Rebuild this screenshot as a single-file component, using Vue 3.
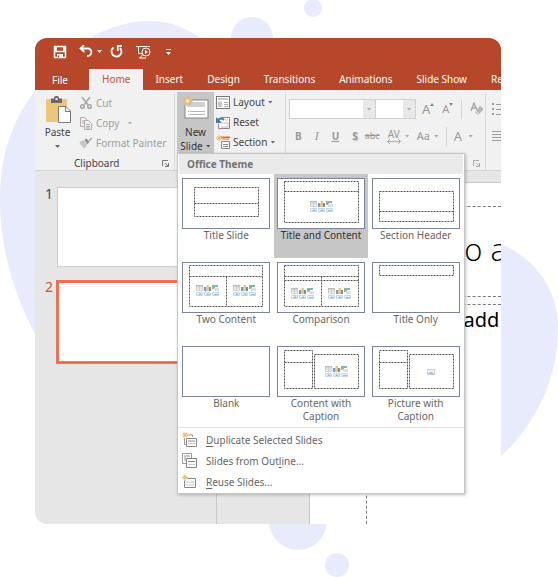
<script setup>
import { ref } from 'vue'

const tabs = ['File', 'Home', 'Insert', 'Design', 'Transitions', 'Animations', 'Slide Show', 'Review']
const activeTab = ref('Home')
const selectedLayout = ref('Title and Content')

const layouts = [
  { name: 'Title Slide', d: 'M12.5 9.5H76.5V38.5H12.5ZM12.5 25.5H76.5', icons: [] },
  { name: 'Title and Content', d: 'M7.5 3.5H81.5V44.5H7.5ZM7.5 13.5H81.5', icons: [[33, 23]] },
  { name: 'Section Header', d: 'M7.5 13.5H81.5V43.5H7.5ZM7.5 33.5H81.5', icons: [] },
  { name: 'Two Content', d: 'M7.5 3.5H80.5V44.5H7.5ZM7.5 14.5H80.5M44.5 14.5V44.5', icons: [[14, 23], [51, 23]] },
  { name: 'Comparison', d: 'M7.5 3.5H81.5V44.5H7.5ZM7.5 14.5H81.5M7.5 18.5H81.5M44.5 14.5V44.5', icons: [[14, 26], [51, 26]] },
  { name: 'Title Only', d: 'M7.5 3.5H81.5V13.5H7.5Z', icons: [] },
  { name: 'Blank', d: '', icons: [] },
  { name: 'Content with Caption', d: 'M7.5 4.5H35.5V42.5H7.5ZM7.5 16.5H35.5M37.5 8.5H81.5V42.5H37.5Z', icons: [[48, 20]] },
  { name: 'Picture with Caption', d: 'M7.5 4.5H35.5V42.5H7.5ZM7.5 16.5H35.5M37.5 8.5H81.5V42.5H37.5Z', icons: [], picture: true }
]
</script>

<template>
  <main class="page">
    <svg class="blobs" viewBox="0 0 558 577" aria-hidden="true">
      <g fill="#e8ebfb">
        <path d="M35 334C12 290 0 245 0 200C0 155 12 121 35 91C62 50 105 21 150 21C172 21 188 29 203 40V334Z" />
        <path d="M501 244C536 259 558 290 558 328C558 378 536 424 501 456Z" />
        <circle cx="252" cy="38" r="21" />
        <circle cx="313" cy="8" r="9" />
        <circle cx="298" cy="521" r="29" />
        <circle cx="337" cy="565" r="12" />
      </g>
    </svg>

    <section class="window">
      <header class="titlebar">
        <button class="qa" aria-label="Save">
          <svg width="14" height="14" viewBox="0 0 14 14" fill="none" stroke="#fff" stroke-width="1.5"><path d="M1.5 1.5H12.5V12.5H1.5ZM3 1.5V6.5H11V1.5" /><path d="M4 9H10V12.5H4Z" fill="#fff" stroke="none" /><path d="M5.5 10.5V12.5" stroke="#b7472a" /></svg>
        </button>
        <button class="qa undo" aria-label="Undo">
          <svg width="14" height="14" viewBox="0 0 14 14" fill="none" stroke="#fff" stroke-width="1.8"><path d="M5 0L1.5 3.5L5.5 7M2 3.5H8.5C14 3.5 13.5 11 8 11" /></svg>
          <svg width="5" height="3" viewBox="0 0 5 3"><path d="M0 0H5L2.5 3Z" fill="#fff" /></svg>
        </button>
        <button class="qa redo" aria-label="Redo">
          <svg width="14" height="14" viewBox="0 0 14 14" fill="none" stroke="#fff" stroke-width="1.8"><path d="M3.5 2.5A5 5 0 1 0 10 3M7 1H12M7.8 1V6" /></svg>
        </button>
        <button class="qa show" aria-label="Start slide show">
          <svg width="16" height="14" viewBox="0 0 16 14" fill="none" stroke="#fff"><path d="M0 1.5H14M2.5 1.5V8.5H6M7 9L4 13M3 13H10" /><circle cx="10" cy="7" r="4" /><path d="M9 5L12 7L9 9Z" fill="#fff" stroke="none" /></svg>
        </button>
        <button class="qa more" aria-label="Customize toolbar">
          <svg width="5" height="6" viewBox="0 0 5 6" fill="#fff"><path d="M0 0H5V1H0ZM0 3H5L2.5 6Z" /></svg>
        </button>
      </header>

      <nav class="tabs">
        <button v-for="t in tabs" :key="t" class="tab" :class="{ active: t === activeTab, file: t === 'File' }" @click="activeTab = t">{{ t }}</button>
      </nav>

      <div class="ribbon">
        <section class="group clipboard">
          <div class="tools">
            <button class="paste">
              <svg width="26" height="28" viewBox="0 0 26 28"><rect x="1" y="3" width="21" height="23" rx="1" fill="#edc67c" /><path d="M6 2.5H9C9 .5 10 0 11.5 0S14 .5 14 2.5H17V7H6Z" fill="#696969" /><rect x="10.5" y="2" width="2" height="2" fill="#f1f1f1" /><path d="M13.5 10.5H21L25.5 15V26.5H13.5Z" fill="#fff" stroke="#797979" /><path d="M20.5 10.5V15.5H25.5" fill="none" stroke="#797979" /></svg>
              <span>Paste</span>
              <i class="caret"></i>
            </button>
            <div class="stack muted">
              <button class="row"><svg width="12" height="14" viewBox="0 0 12 14" fill="none" stroke="#a6a6a6" stroke-width="1.5"><path d="M2 1L8 9M10 1L4 9" /><circle cx="2.5" cy="10.5" r="1.8" /><circle cx="9.5" cy="10.5" r="1.8" /></svg>Cut</button>
              <button class="row"><svg width="12" height="13" viewBox="0 0 12 13" fill="#f5f0f3" stroke="#b5aab0"><path d="M.5.5H4.5L7.5 3.5V9.5H.5ZM2 4H5M2 6H5" /><path d="M4.5 3.5H8.5L11.5 6.5V12.5H4.5ZM6 7.5H10M6 9.5H10M6 11H10" /></svg>Copy<i class="caret gap"></i></button>
              <button class="row"><svg width="13" height="12" viewBox="0 0 13 12"><path d="M0 5L4 3L8 7L5 12L4 10L3 10.5L2 8L1 8Z" fill="#c9c5c5" /><path d="M5 3L7 1.5L10 5L8 7Z" fill="#8f8f8f" /><path d="M9 3L12 .5L13 1.5L10 4.5Z" fill="#aaa" /></svg>Format Painter</button>
            </div>
          </div>
          <footer class="caption"><span>Clipboard</span>
            <svg class="launch" width="7" height="7" viewBox="0 0 7 7" fill="none" stroke="#777"><path d="M.5 6V.5H6M3 3L6 6M6.5 3V6.5H3" /></svg>
          </footer>
        </section>

        <section class="group slides">
          <button class="new-slide">
            <svg width="28" height="26" viewBox="0 0 28 26"><rect x="3" y="5" width="23" height="18" fill="#fff" stroke="#858585" /><path d="M6 7H23V12H6Z" fill="#d0d0d0" /><path d="M6 16.5H23M6 19.5H23" stroke="#b5b5b5" stroke-dasharray="1 1 15 1" /><circle cx="5.5" cy="6" r="5" fill="#c6c6c6" /><path d="M5.5 1V11M.5 6H10.5M2 2.5L9 9.5M9 2.5L2 9.5" stroke="#e9ba65" stroke-width="1.5" /><circle cx="5.5" cy="6" r="2" fill="#f9dfaa" /></svg>
            <span>New</span>
            <span class="line">Slide<i class="caret"></i></span>
          </button>
          <div class="stack">
            <button class="row"><svg width="14" height="13" viewBox="0 0 14 13"><rect x=".5" y=".5" width="13" height="12" fill="#fff" stroke="#777" /><path d="M2 2H12V4H2ZM2 5.5H6V11H2Z" fill="#c7c7c7" /><path d="M8 6.5H12M8 8.5H12M8 10.5H12" stroke="#aaa" /></svg>Layout<i class="caret"></i></button>
            <button class="row"><svg width="14" height="13" viewBox="0 0 14 13"><path d="M5 1.5H13.5V12.5H2.5V8" fill="#fff" stroke="#888" /><path d="M9 4H12M6 7H12V11H5" stroke="#bbb" fill="none" /><path d="M2 6C2 3 5 1 8 4" fill="none" stroke="#4178ae" stroke-width="2" /><path d="M0 1V7H6Z" fill="#4178ae" /></svg>Reset</button>
            <button class="row"><svg width="14" height="14" viewBox="0 0 14 14"><path d="M5 2.5H14" stroke="#e0712c" stroke-width="2" /><path d="M5.5 6.5H13.5V13.5H5.5ZM7 9.5H12M7 11.5H12" fill="#fff" stroke="#888" /><path d="M6 4.5H13" stroke="#edb18c" /><path d="M3 0V6M0 3H6M1 1L5 5M5 1L1 5" stroke="#e9b765" /></svg>Section<i class="caret"></i></button>
          </div>
        </section>

        <section class="group font">
          <div class="fontrow">
            <div class="combos">
              <span class="combo wide"><input aria-label="Font" /><button aria-label="Font list"><i class="caret"></i></button></span>
              <span class="combo"><input aria-label="Font size" /><button aria-label="Size list"><i class="caret"></i></button></span>
            </div>
            <button class="glyph big" aria-label="Grow font">A<svg width="4" height="12" viewBox="0 0 4 12"><path d="M0 3L2 0L4 3Z" fill="#888" /></svg></button>
            <button class="glyph shrink" aria-label="Shrink font">A<svg width="4" height="12" viewBox="0 0 4 12"><path d="M0 0L2 3L4 0Z" fill="#888" /></svg></button>
            <i class="rule"></i>
            <button class="glyph" aria-label="Clear formatting"><svg width="14" height="14" viewBox="0 0 14 14"><path d="M1 9L4 1L7 8M2 6H6" fill="none" stroke="#aaa" stroke-width="1.5" /><path d="M5 10L10 4L13 6V8L8 13Z" fill="#b7b7b7" /><path d="M6 9L9 12" stroke="#eee" /></svg></button>
          </div>
          <div class="fontrow second">
            <div class="styles">
              <button class="glyph"><b>B</b></button>
              <button class="glyph serif"><em>I</em></button>
              <button class="glyph"><b><u>U</u></b></button>
              <button class="glyph shadow"><b>S</b></button>
            </div>
            <button class="glyph strike"><s>abc</s></button>
            <button class="glyph av"><span>AV<svg width="14" height="5" viewBox="0 0 14 5" fill="none" stroke="#aaa"><path d="M0 2.5H14M3 0L.5 2.5L3 5M11 0L13.5 2.5L11 5" /></svg></span><i class="caret"></i></button>
            <button class="glyph mid">Aa<i class="caret"></i></button>
            <i class="rule"></i>
            <button class="glyph large">A<i class="caret"></i></button>
          </div>
          <footer class="caption"><span></span>
            <svg class="launch" width="7" height="7" viewBox="0 0 7 7" fill="none" stroke="#aaa"><path d="M.5 6V.5H6M3 3L6 6M6.5 3V6.5H3" /></svg>
          </footer>
        </section>

        <section class="group paragraph">
          <svg width="15" height="14" viewBox="0 0 15 14" stroke="#9c9c9c"><path d="M0 2H2M0 7H2M0 12H2" stroke-width="2" /><path d="M4 2.5H15M4 7.5H15M4 12.5H15" /></svg>
          <svg width="15" height="12" viewBox="0 0 15 12" stroke="#9c9c9c"><path d="M0 1.5H15M0 4.5H15M0 7.5H15M0 10.5H15" /></svg>
        </section>
      </div>

      <div class="workspace">
        <aside class="outline">
          <div class="slide-row"><span>1</span><div class="slide"></div></div>
          <div class="slide-row current"><span>2</span><div class="slide"></div></div>
        </aside>
        <div class="stage">
          <div class="canvas">
            <div class="title-box">to add title</div>
            <div class="text-box">to add</div>
          </div>
        </div>
      </div>

      <div class="menu">
        <h2>Office Theme</h2>
        <div class="gallery">
          <button v-for="l in layouts" :key="l.name" class="layout" :class="{ selected: l.name === selectedLayout }" @click="selectedLayout = l.name">
            <svg width="88" height="51" viewBox="0 0 88 51" aria-hidden="true">
              <rect x=".5" y=".5" width="87" height="50" fill="#fff" stroke="#7b849b" />
              <path :d="l.d" fill="none" stroke="#555" stroke-dasharray="2 1" />
              <g v-for="(p, n) in l.icons" :key="n" :transform="`translate(${p[0]} ${p[1]})`" opacity=".8">
                <path d="M.5.5H6.5V5.5H.5ZM3.5 1V5M1 3H6" fill="#f5f5f5" stroke="#c2c2c2" />
                <path d="M0 0H7V1.5H0Z" fill="#aaa" />
                <path d="M8 2H10.500V6H8Z" fill="#4d87b9" /><path d="M10.500 0H13V6H10.500Z" fill="#e9b950" /><path d="M13 2H15V6H13Z" fill="#58718b" />
                <path d="M16 0H22V2H19V4H16Z" fill="#66a78d" /><path d="M18 3H23V6H18Z" fill="#d4dcda" />
                <path d="M.5 7.5H6.5V10.5H.5ZM8.5 7.5H14.5V10.5H8.5ZM16.5 7.5H22.5V10.5H16.5Z" fill="#eef4fa" stroke="#b5cde4" />
                <path d="M2 10L4 8L6 10ZM10 10L12 8L14 10ZM18 9H22V10H18Z" fill="#82abd3" />
              </g>
              <g v-if="l.picture"><rect x="55.5" y="23.5" width="7" height="5" fill="#f5f5f5" stroke="#c5cfd8" /><path d="M56 28L59 25.5L62 28Z" fill="#98bde0" /></g>
            </svg>
            <span>{{ l.name }}</span>
          </button>
        </div>
        <div class="commands">
          <button class="command">
            <svg width="16" height="15" viewBox="0 0 16 15"><path d="M5 3H10.5V5M2.5 6V12.5H4" fill="none" stroke="#999" /><path d="M4.5 6.5H14.5V14.5H4.5ZM6 9H13" fill="#fff" stroke="#8c8c8c" /><path d="M6 11.5H13" stroke="#ccc" /><path d="M3 0V6M0 3H6M1 1L5 5M5 1L1 5" stroke="#e9b765" /></svg>
            <span><u>D</u>uplicate Selected Slides</span>
          </button>
          <button class="command">
            <svg width="16" height="15" viewBox="0 0 16 15"><path d="M.5.5H9.5V10.5H.5ZM2 3H8M2 5H4M2 7H4" fill="#fff" stroke="#999" /><path d="M4.5 5.5H14.5V14.5H4.5ZM6 8.5H13" fill="#fff" stroke="#858585" /><path d="M6 11.5H13" stroke="#ccc" /></svg>
            <span>Slides from Out<u>l</u>ine...</span>
          </button>
          <button class="command">
            <svg width="16" height="15" viewBox="0 0 16 15"><path d="M2.5 4.5H13.5V13.5H2.5Z" fill="#fff" stroke="#888" /><path d="M4 8H6M7 8H12M4 11H6M7 11H12" stroke="#bbb" /><circle cx="3" cy="4" r="2.5" fill="#fff" /><path d="M3 0V7M0 3.5H6M1 1.5L5 5.5M5 1.5L1 5.5" stroke="#e9b765" /></svg>
            <span><u>R</u>euse Slides...</span>
          </button>
        </div>
      </div>
    </section>
  </main>
</template>

<style>
body { margin: 0; background: #fff; }
</style>

<style scoped>
* { box-sizing: border-box; }
.page {
  position: relative;
  padding: 38px 57px 53px 35px;
  font-family: "Noto Sans", "Open Sans", sans-serif;
  font-size: 10px;
  line-height: 14px;
  color: #444;
}
.blobs { position: absolute; inset: 0; width: 100%; height: 100%; }
button { border: 0; padding: 0; margin: 0; background: none; font: inherit; color: inherit; }
svg { display: block; flex: none; }
.window { position: relative; border-radius: 12px 12px 0 12px; overflow: hidden; background: #e6e6e6; }

.titlebar { display: flex; align-items: center; height: 27px; padding: 0 18px; background: #b7472a; }
.qa { display: flex; align-items: center; gap: 4px; }
.undo { margin-left: 12px; }
.redo { margin-left: 8px; }
.show { margin-left: 12px; }
.more { margin-left: 14px; }

.tabs { display: flex; align-items: flex-end; height: 25px; background: #b7472a; overflow: hidden; color: #fff; }
.tab { flex: none; height: 21px; padding: 0 12px 2px; white-space: nowrap; }
.tab.file { padding: 0 21px 0 17px; }
.tab.active { padding: 0 13px 2px; background: #f1f1f1; color: #d04f2d; }

.ribbon { display: flex; height: 81px; background: #f1f1f1; border-bottom: 1px solid #d5d5d5; overflow: hidden; }
.group { display: flex; flex: none; flex-direction: column; margin: 3px 0 0; border-right: 1px solid #dadada; }
.clipboard { width: 140px; }
.tools { display: flex; flex: 1; gap: 8px; padding-left: 9px; }
.caret { display: inline-block; flex: none; width: 5px; height: 3px; background: currentColor; clip-path: polygon(0 0, 100% 0, 50% 100%); opacity: .8; }
.paste { display: flex; flex-direction: column; align-items: center; align-self: flex-start; width: 27px; padding-top: 3px; }
.paste span { margin-top: 1px; }
.paste .caret { margin-top: 6px; }
.stack { display: flex; flex-direction: column; }
.muted { color: #a0a0a0; }
.row { display: flex; align-items: center; gap: 3px; height: 20px; white-space: nowrap; }
.row svg { width: 14px; }
.caret.gap { margin-left: 5px; }
.caption { display: flex; align-items: center; height: 14px; margin-top: auto; padding: 0 5px 0 39px; }
.caption span { flex: 1; }
.group.slides { flex-direction: row; width: 111px; gap: 2px; padding-left: 2px; margin-top: 2px; }
.new-slide { display: flex; flex-direction: column; align-items: center; width: 37px; height: 62px; padding-top: 3px; background: #c6c6c6; color: #333; }
.new-slide span:first-of-type { margin-top: 4px; }
.line { display: flex; align-items: center; gap: 3px; }

.font { width: 200px; padding: 6px 0 0 3px; color: #999; }
.fontrow { display: flex; align-items: center; gap: 8px; height: 20px; }
.combos { display: flex; }
.combo { display: flex; width: 41px; height: 20px; border: 1px solid #d0d0d0; background: #fff; }
.combo.wide { width: 86px; border-right: 0; }
.combo input { flex: 1; min-width: 0; border: 0; padding: 0; background: transparent; }
.combo button { display: flex; align-items: center; justify-content: center; width: 12px; background: #e8e8e8; }
.glyph { display: flex; align-items: center; color: #999; }
.glyph.big { font-size: 13px; margin-left: -2px; }
.glyph.shrink { font-size: 11px; }
.rule { width: 1px; height: 19px; background: #d5d5d5; }
.second { gap: 7px; margin-top: 7px; padding-left: 6px; }
.styles { display: flex; gap: 13px; }
.serif { font-family: "Liberation Serif", serif; font-size: 12px; }
.shadow { text-shadow: 1px 1px 1px #bbb; }
.strike { font-size: 9px; }
.av span { display: flex; flex-direction: column; align-items: center; line-height: 10px; }
.av, .mid, .large { gap: 4px; }
.mid { font-size: 11px; }
.large { font-size: 13px; gap: 6px; }
.group.paragraph { gap: 14px; padding: 9px 0 0 6px; border: 0; }

.workspace { display: flex; height: 353px; }
.outline { display: flex; flex-direction: column; gap: 13px; width: 182px; flex: none; padding: 16px 0 0 10px; border-right: 1px solid #c8c8c8; overflow: hidden; }
.slide-row { display: flex; align-items: flex-start; gap: 4px; font-size: 14px; }
.slide { width: 142px; height: 80px; background: #fff; border: 1px solid #ccc; }
.slide-row.current { color: #d9532f; gap: 3px; }
.current .slide { width: 144px; height: 84px; border: 3px solid #f0714f; }
.stage { flex: 1; min-width: 0; padding: 11px 0 0 92px; }
.canvas { height: 100%; padding: 23px 0 0 56px; background: #fff; border: 1px solid #c8c8c8; border-width: 1px 0 0 1px; overflow: hidden; color: #000; white-space: nowrap; }
.title-box { height: 91px; padding-left: 87px; border: 1px dashed #777; border-right: 0; font-family: "Open Sans", sans-serif; font-weight: 300; font-size: 31px; line-height: 84px; }
.text-box { height: 240px; margin-top: 7px; padding-left: 72px; border: 1px dashed #777; border-right: 0; font-size: 20px; line-height: 30px; }

.menu { position: absolute; left: 142px; top: 115px; width: 288px; background: #fff; border: 1px solid #c6c6c6; box-shadow: 1px 1px 3px rgba(0, 0, 0, .25); color: #666; }
.menu h2 { margin: 0 1px; height: 20px; padding-left: 8px; background: #eaeaea; font-size: 10px; line-height: 20px; font-weight: 700; color: #737373; }
.gallery { display: grid; grid-template-columns: repeat(3, 1fr); grid-auto-rows: 84px; padding: 0 1px 1px; border-bottom: 1px solid #e1e1e1; }
.layout { display: flex; flex-direction: column; align-items: center; padding: 4px 3px 0; line-height: 13px; }
.layout span { max-width: 86px; }
.layout.selected { background: #c6c6c6; color: #333; }
.layout.selected span { white-space: nowrap; }
.commands { display: flex; flex-direction: column; padding: 1px 4px; }
.command { display: flex; align-items: center; gap: 8px; height: 21px; text-align: left; }
.command u { text-underline-offset: 2px; }
</style>
